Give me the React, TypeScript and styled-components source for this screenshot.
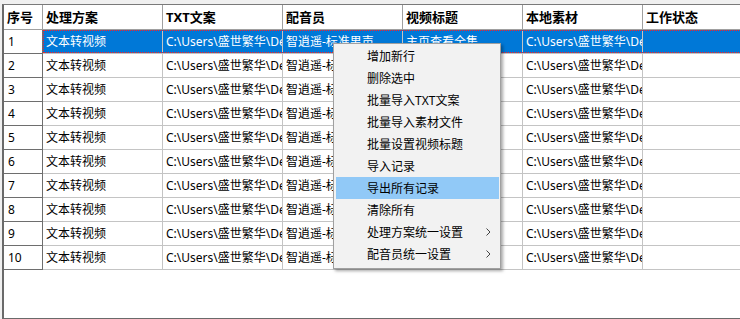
import styled, { createGlobalStyle } from "styled-components";

const GlobalStyle = createGlobalStyle`
	html, body {
		margin: 0;
		padding: 0;
		background: #f0f0f0;
		font-family: "Noto Sans", "Noto Sans CJK SC", sans-serif;
		font-size: 12px;
		color: #000;
	}
`;

const Page = styled.div`
	position: relative;
	width: 740px;
	height: 319px;
	overflow: hidden;
	padding-top: 4px;
	padding-left: 2px;
	box-sizing: border-box;
`;

const Frame = styled.div`
	height: 315px;
	box-sizing: border-box;
	background: #fff;
	border-top: 1px solid #7a7a7a;
	border-left: 2px solid #6a6a6a;
	border-bottom: 1px solid #6a6a6a;
	overflow: hidden;
`;

const Row = styled.div<{ head?: boolean }>`
	display: flex;
	height: ${(p) => (p.head ? 25 : 24)}px;
	width: 900px;
`;

const RowBody = styled.div<{ selected?: boolean }>`
	position: relative;
	display: flex;
	background: ${(p) => (p.selected ? "#0078d7" : "#fff")};
	color: ${(p) => (p.selected ? "#fff" : "#000")};
	&::after {
		content: "";
		display: ${(p) => (p.selected ? "block" : "none")};
		position: absolute;
		left: 0;
		top: 0;
		right: 160px;
		bottom: 1px;
		border: 1px dotted #ff2020;
		pointer-events: none;
	}
`;

const HeadCell = styled.div<{ w: number }>`
	width: ${(p) => p.w}px;
	flex: none;
	box-sizing: border-box;
	border-right: 1px solid #a0a0a0;
	border-bottom: 1px solid #a0a0a0;
	padding-left: 3px;
	font-size: 13px;
	font-weight: bold;
	line-height: 24px;
	white-space: nowrap;
	overflow: hidden;
`;

const IndexCell = styled.div`
	width: 39px;
	flex: none;
	box-sizing: border-box;
	border-right: 1px solid #6e6e6e;
	border-bottom: 1px solid #6e6e6e;
	padding-left: 4px;
	line-height: 23px;
	background: #fff;
	color: #000;
`;

const Cell = styled.div<{ w: number }>`
	width: ${(p) => p.w}px;
	flex: none;
	box-sizing: border-box;
	border-right: 1px solid #c4c4c4;
	border-bottom: 1px solid #c4c4c4;
	padding-left: 3px;
	line-height: 23px;
	white-space: nowrap;
	overflow: hidden;
`;

const Menu = styled.div`
	position: absolute;
	left: 333px;
	top: 43px;
	width: 168px;
	box-sizing: border-box;
	padding: 1px 1px 3px 2px;
	background: #f2f2f2;
	border: 1px solid #a0a0a0;
	box-shadow: 2px 2px 3px rgba(0, 0, 0, 0.35);
`;

const MenuItem = styled.div<{ hover?: boolean }>`
	display: flex;
	align-items: center;
	justify-content: space-between;
	height: 22px;
	padding: 0 8px 0 31px;
	background: ${(p) => (p.hover ? "#91c9f7" : "transparent")};
	font-size: 12px;
	white-space: nowrap;
`;

const Chevron = () => (
	<svg width="5" height="8" viewBox="0 0 5 8">
		<polyline points="0.5,0.5 4,4 0.5,7.5" fill="none" stroke="#444" strokeWidth="1" />
	</svg>
);

const columns = [
	{ title: "处理方案", w: 120 },
	{ title: "TXT文案", w: 120 },
	{ title: "配音员", w: 120 },
	{ title: "视频标题", w: 120 },
	{ title: "本地素材", w: 120 },
	{ title: "工作状态", w: 260 },
];

const path = "C:\\Users\\盛世繁华\\Desktop\\素材";

const rows = Array.from({ length: 10 }, (_, i) => ({
	id: i + 1,
	values: ["文本转视频", path, "智逍遥-标准男声", "主页查看全集", path, ""],
}));

const menuItems = [
	{ label: "增加新行" },
	{ label: "删除选中" },
	{ label: "批量导入TXT文案" },
	{ label: "批量导入素材文件" },
	{ label: "批量设置视频标题" },
	{ label: "导入记录" },
	{ label: "导出所有记录", hover: true },
	{ label: "清除所有" },
	{ label: "处理方案统一设置", sub: true },
	{ label: "配音员统一设置", sub: true },
];

export default function App() {
	return (
		<>
			<GlobalStyle />
			<Page>
				<Frame>
					<Row head>
						<HeadCell w={39}>序号</HeadCell>
						{columns.map((c) => (
							<HeadCell key={c.title} w={c.w}>
								{c.title}
							</HeadCell>
						))}
					</Row>
					{rows.map((r) => (
						<Row key={r.id}>
							<IndexCell>{r.id}</IndexCell>
							<RowBody selected={r.id === 1}>
								{r.values.map((v, i) => (
									<Cell key={i} w={columns[i].w}>
										{v}
									</Cell>
								))}
							</RowBody>
						</Row>
					))}
				</Frame>
				<Menu>
					{menuItems.map((m) => (
						<MenuItem key={m.label} hover={m.hover}>
							<span>{m.label}</span>
							{m.sub && <Chevron />}
						</MenuItem>
					))}
				</Menu>
			</Page>
		</>
	);
}
